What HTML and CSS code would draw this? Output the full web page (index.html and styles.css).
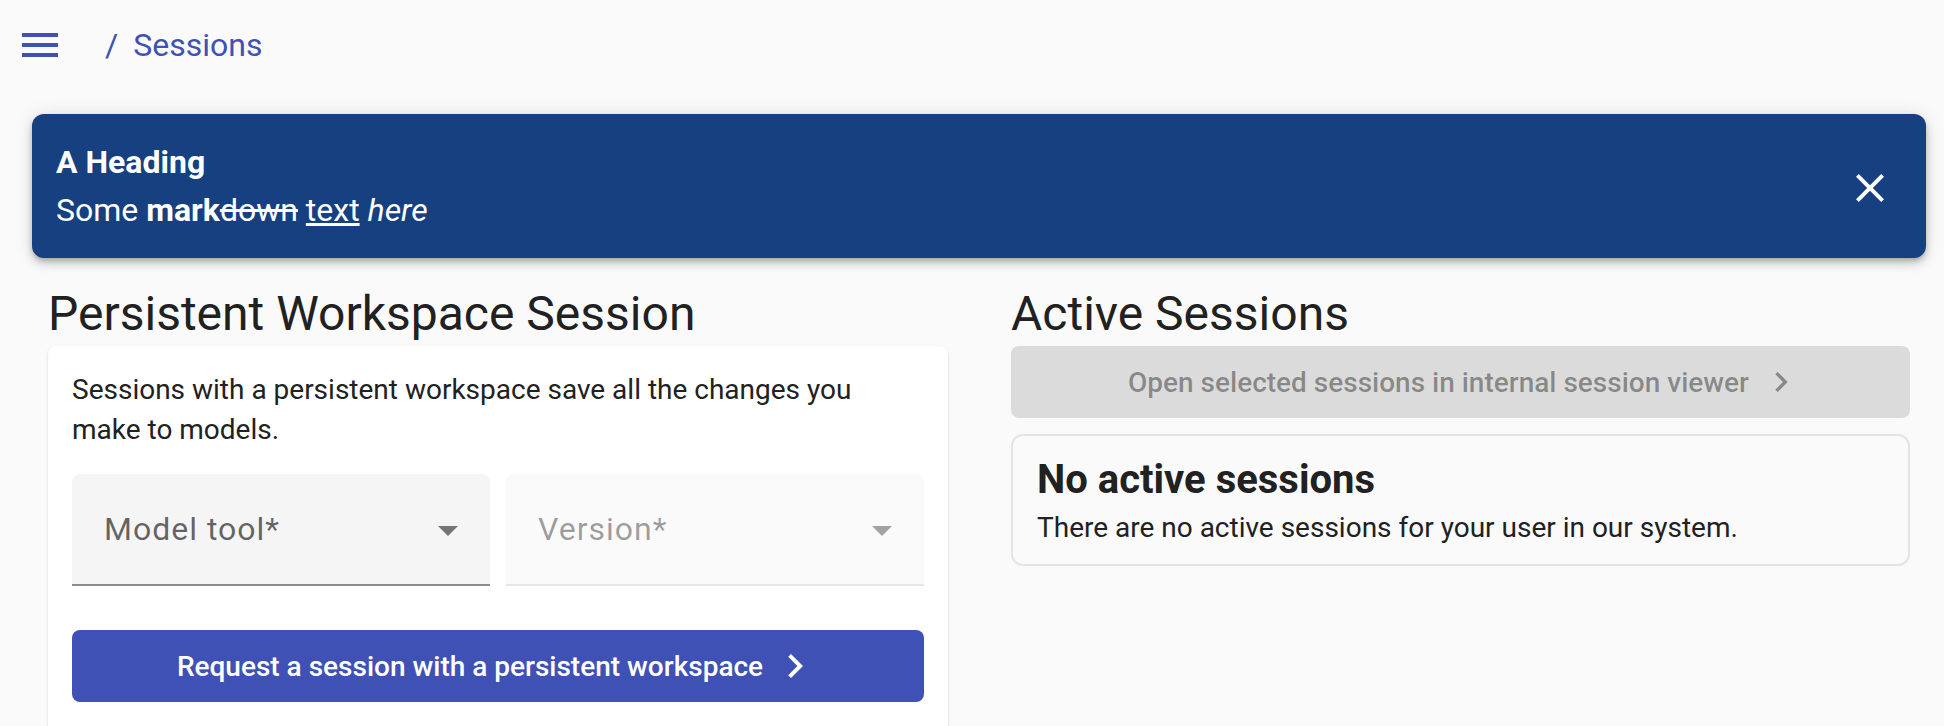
FILE: index.html
```html
<!DOCTYPE html>
<html lang="en">
<head>
<meta charset="utf-8">
<title>Sessions</title>
<link rel="stylesheet" href="styles.css">
</head>
<body>
<header class="topbar">
  <button class="menu-btn" aria-label="Menu">
    <svg viewBox="0 0 24 24" width="48" height="48"><path fill="currentColor" d="M3 18h18v-2H3v2zm0-5h18v-2H3v2zm0-7v2h18V6H3z"/></svg>
  </button>
  <nav class="crumbs"><span class="crumb-sep">/</span><span class="crumb">Sessions</span></nav>
</header>

<div class="banner">
  <div class="banner-text">
    <div class="banner-title">A Heading</div>
    <div class="banner-body">Some <strong>mark</strong><s>down</s> <u>text</u> <em>here</em></div>
  </div>
  <button class="banner-close" aria-label="Close">
    <svg viewBox="0 0 24 24" width="48" height="48"><path fill="currentColor" d="M19 6.41L17.59 5 12 10.59 6.41 5 5 6.41 10.59 12 5 17.59 6.41 19 12 13.41 17.59 19 19 17.59 13.41 12z"/></svg>
  </button>
</div>

<main class="columns">
  <section class="col">
    <h2 class="col-title">Persistent Workspace Session</h2>
    <div class="card">
      <p class="card-text">Sessions with a persistent workspace save all the changes you make to models.</p>
      <div class="fields">
        <div class="field">
          <span class="field-label">Model tool*</span>
          <span class="field-arrow"></span>
        </div>
        <div class="field field-disabled">
          <span class="field-label">Version*</span>
          <span class="field-arrow"></span>
        </div>
      </div>
      <button class="btn btn-primary">
        <span>Request a session with a persistent workspace</span>
        <svg class="btn-icon" viewBox="0 0 24 24" width="48" height="48"><path fill="currentColor" d="M10 6L8.59 7.41 13.17 12l-4.58 4.59L10 18l6-6z"/></svg>
      </button>
    </div>
  </section>

  <section class="col">
    <h2 class="col-title">Active Sessions</h2>
    <button class="btn btn-disabled" disabled>
      <span>Open selected sessions in internal session viewer</span>
      <svg class="btn-icon small" viewBox="0 0 24 24" width="40" height="40"><path fill="currentColor" d="M10 6L8.59 7.41 13.17 12l-4.58 4.59L10 18l6-6z"/></svg>
    </button>
    <div class="empty-card">
      <h3 class="empty-title">No active sessions</h3>
      <p class="empty-text">There are no active sessions for your user in our system.</p>
    </div>
  </section>
</main>
</body>
</html>
```

FILE: styles.css
```css
* { box-sizing: border-box; }

html, body {
  margin: 0;
  background: #fafafa;
  font-family: Roboto, "Noto Sans", "Liberation Sans", sans-serif;
  color: rgba(0, 0, 0, 0.87);
}

button { font-family: inherit; }

.topbar {
  display: flex;
  align-items: center;
  height: 90px;
  padding: 0 16px;
}

.menu-btn {
  display: flex;
  width: 48px;
  height: 48px;
  padding: 0;
  border: 0;
  background: none;
  color: #3f51b5;
}

.crumbs {
  display: flex;
  align-items: center;
  margin-left: 41px;
  font-size: 32px;
  line-height: 48px;
  color: #3f51b5;
}

.crumb-sep { margin-right: 15px; }

.banner {
  display: flex;
  align-items: center;
  justify-content: space-between;
  margin: 24px 18px 0 32px;
  padding: 28px 32px 28px 24px;
  background: #164080;
  color: #fff;
  border-radius: 12px;
  box-shadow: 0 3px 5px -1px rgba(0,0,0,.2), 0 6px 10px 0 rgba(0,0,0,.14), 0 1px 18px 0 rgba(0,0,0,.12);
}

.banner-title {
  font-size: 32px;
  line-height: 40px;
  font-weight: 700;
  margin-bottom: 8px;
}

.banner-body {
  font-size: 32px;
  line-height: 40px;
}

.banner-body strong { font-weight: 700; }

.banner-close {
  display: flex;
  width: 48px;
  height: 48px;
  margin-top: 3px;
  padding: 0;
  border: 0;
  background: none;
  color: #fff;
}

.columns {
  display: grid;
  grid-template-columns: 900px 899px;
  column-gap: 63px;
  margin: 24px 34px 0 48px;
}

.col-title {
  margin: 0;
  font-size: 48px;
  line-height: 64px;
  font-weight: 400;
  color: #212121;
}

.card {
  background: #fff;
  border-radius: 8px;
  padding: 24px 24px 32px;
  box-shadow: 0 2px 1px -1px rgba(0,0,0,.2), 0 1px 1px 0 rgba(0,0,0,.14), 0 1px 3px 0 rgba(0,0,0,.12);
}

.card-text {
  margin: 0;
  font-size: 28px;
  line-height: 40px;
  color: #212121;
}

.fields {
  display: flex;
  gap: 16px;
  margin-top: 24px;
}

.field {
  flex: 1 1 0;
  display: flex;
  align-items: center;
  justify-content: space-between;
  height: 112px;
  padding: 0 32px;
  border-radius: 8px 8px 0 0;
  background: #f5f5f5;
  border-bottom: 2px solid #8c8c8c;
  font-size: 32px;
  letter-spacing: 1px;
  color: rgba(0, 0, 0, 0.6);
}

.field-arrow {
  width: 0;
  height: 0;
  margin-top: 4px;
  border-left: 10px solid transparent;
  border-right: 10px solid transparent;
  border-top: 10px solid #757575;
}

.field-disabled {
  background: #fafafa;
  border-bottom-color: #e6e6e6;
  color: rgba(0, 0, 0, 0.38);
}

.field-disabled .field-arrow { border-top-color: #a3a3a3; }

.btn {
  display: flex;
  align-items: center;
  justify-content: center;
  width: 100%;
  height: 72px;
  padding: 0;
  border: 0;
  border-radius: 8px;
  font-size: 28px;
  font-weight: 500;
}

.btn-icon { margin-left: 8px; }
.btn-icon.small { margin-left: 12px; }

.btn-primary {
  margin-top: 44px;
  background: #3f51b5;
  color: #fff;
}

.btn-disabled {
  padding-left: 8px;
  background: rgba(0, 0, 0, 0.12);
  color: rgba(0, 0, 0, 0.38);
}

.empty-card {
  margin-top: 16px;
  padding: 16px 24px;
  border: 2px solid #e4e4e7;
  border-radius: 12px;
  background: #fafafa;
}

.empty-title {
  margin: 0;
  font-size: 40px;
  line-height: 56px;
  font-weight: 700;
  color: #212121;
}

.empty-text {
  margin: 0;
  font-size: 28px;
  line-height: 40px;
  color: #212121;
}
```
